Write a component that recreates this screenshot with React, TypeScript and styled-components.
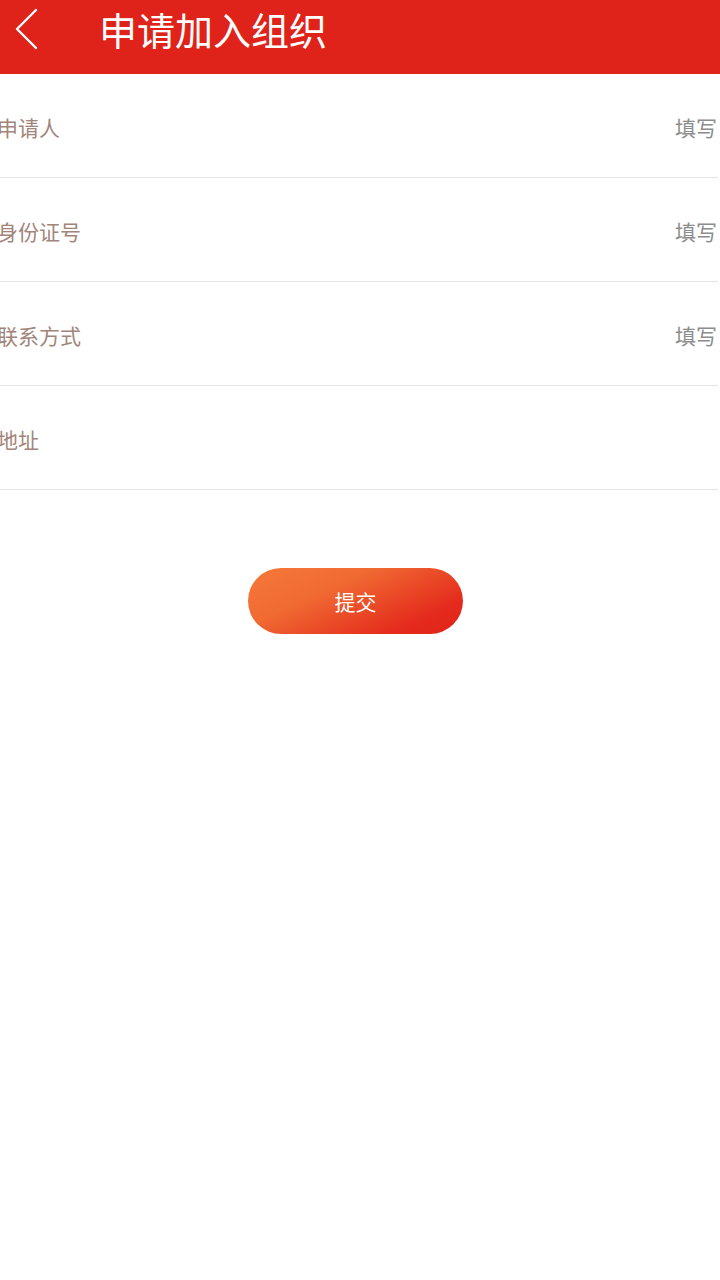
import React from "react";
import styled, { createGlobalStyle } from "styled-components";

const Global = createGlobalStyle`
  html, body { margin: 0; padding: 0; background: #ffffff; }
  body { font-family: "Noto Sans CJK SC", "Noto Sans", sans-serif; overflow-x: hidden; }
`;

const Page = styled.div`
  width: 720px;
  min-height: 1280px;
  background: #ffffff;
  overflow: hidden;
`;

const Header = styled.header`
  height: 74px;
  background: #e0231a;
  display: flex;
  align-items: flex-start;
  box-sizing: border-box;
`;

const BackButton = styled.div`
  width: 99px;
  height: 58px;
  display: flex;
  align-items: center;
  padding-left: 14px;
  box-sizing: border-box;
`;

const Title = styled.h1`
  margin: 0;
  color: #ffffff;
  font-size: 38px;
  font-weight: 400;
  line-height: 58px;
  height: 58px;
`;

const Form = styled.div`
  display: flex;
  flex-direction: column;
`;

const Row = styled.div`
  height: 104px;
  display: flex;
  align-items: center;
  justify-content: space-between;
  border-bottom: 1.5px solid #e6e6e6;
  margin-right: 2px;
  box-sizing: border-box;
  padding-top: 3px;
`;

const Label = styled.span`
  margin-left: -3px;
  font-size: 21px;
  color: #a2857a;
  line-height: 1;
`;

const Hint = styled.span`
  font-size: 21px;
  color: #8c8c8c;
  line-height: 1;
  margin-right: 1px;
`;

const ButtonRow = styled.div`
  display: flex;
  padding-left: 248px;
  padding-top: 78px;
`;

const SubmitButton = styled.button`
  width: 215px;
  height: 66px;
  border: none;
  border-radius: 33px;
  background: linear-gradient(155deg, #f6783a 0%, #f06a32 35%, #e42a1c 80%, #e0231a 100%);
  color: #ffffff;
  font-family: "Noto Sans CJK SC", sans-serif;
  font-size: 21px;
  display: flex;
  align-items: center;
  justify-content: center;
  padding: 0;
`;

const rows = [
  { label: "申请人", hint: "填写" },
  { label: "身份证号", hint: "填写" },
  { label: "联系方式", hint: "填写" },
  { label: "地址", hint: "" },
];

export default function App() {
  return (
    <Page>
      <Global />
      <Header>
        <BackButton>
          <svg width="26" height="42" viewBox="0 0 26 42" fill="none">
            <path d="M22 2 L3 21 L22 40" stroke="#ffffff" strokeWidth="2.4" strokeLinecap="round" strokeLinejoin="round" />
          </svg>
        </BackButton>
        <Title>申请加入组织</Title>
      </Header>
      <Form>
        {rows.map((r) => (
          <Row key={r.label}>
            <Label>{r.label}</Label>
            {r.hint && <Hint>{r.hint}</Hint>}
          </Row>
        ))}
      </Form>
      <ButtonRow>
        <SubmitButton>提交</SubmitButton>
      </ButtonRow>
    </Page>
  );
}
